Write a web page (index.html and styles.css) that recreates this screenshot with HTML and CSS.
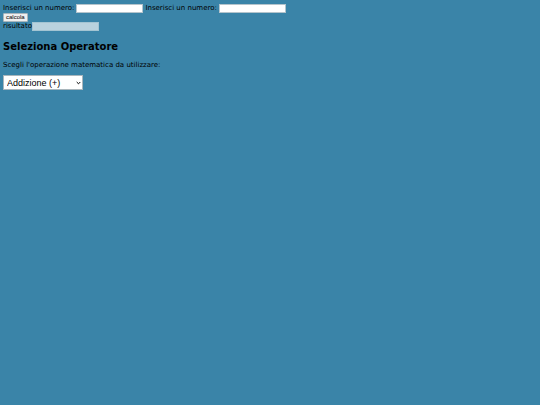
FILE: index.html
```html
<!DOCTYPE html>
<html lang="it">
<head>
    <meta charset="UTF-8">
    <meta name="viewport" content="width=device-width, initial-scale=1.0">
    <title>Calcolatrice</title>
    <link rel="stylesheet" href="styles.css">
</head>
<body>
    <div class="numeri">
        <label for="num1">Inserisci un numero:</label>
        <input type="text" id="num1" class="campo">
        <label for="num2">Inserisci un numero:</label>
        <input type="text" id="num2" class="campo">
    </div>
    <button type="button" class="calcola">calcola</button>
    <div class="risultato">
        <label for="risultato">risultato</label><input type="text" id="risultato" class="campo" disabled>
    </div>

    <h2>Seleziona Operatore</h2>
    <label for="operatore" class="descrizione">Scegli l'operazione matematica da utilizzare:</label>
    <select id="operatore" class="operatore">
        <option value="+">Addizione (+)</option>
        <option value="-">Sottrazione (-)</option>
        <option value="*">Moltiplicazione (*)</option>
        <option value="/">Divisione (/)</option>
    </select>
</body>
</html>
```
FILE: styles.css
```css
body {
    margin: 4px 3px;
    background-color: #3a84a8;
    color: black;
    font-family: Verdana, "DejaVu Sans", sans-serif;
    font-size: 7px;
    line-height: 9px;
}
.numeri,
.risultato {
    display: flex;
    align-items: center;
}
.numeri {
    gap: 2px;
}
.campo {
    box-sizing: border-box;
    width: 67px;
    height: 9px;
    padding: 0 1px;
    border: 1px solid #b4c4cc;
    background: white;
    font-family: "Liberation Sans", Arial, sans-serif;
    font-size: 6px;
}
.campo:disabled {
    border-color: #a3c4d2;
    background: #b9d2de;
}
.calcola {
    display: block;
    box-sizing: border-box;
    height: 9px;
    padding: 0 2px;
    border: 1px solid #a9b6bc;
    border-radius: 1px;
    background: #efefef;
    color: black;
    font-family: "Liberation Sans", Arial, sans-serif;
    font-size: 6px;
    line-height: 7px;
}
h2 {
    margin: 9px 0 8px;
    font-size: 10px;
    line-height: 13px;
}
.descrizione {
    display: block;
    margin-bottom: 5px;
}
.operatore {
    display: block;
    box-sizing: border-box;
    width: 80px;
    height: 15px;
    padding: 0 3px;
    border: 1px solid #a9b6bc;
    border-radius: 0;
    appearance: none;
    background: white url("data:image/svg+xml,%3Csvg xmlns='http://www.w3.org/2000/svg' viewBox='0 0 5 4'%3E%3Cpath d='M.7 1l1.8 1.8L4.3 1' fill='none' stroke='black'/%3E%3C/svg%3E") no-repeat right 1px center / 5px 4px;
    color: black;
    font-family: "Liberation Sans", Arial, sans-serif;
    font-size: 9px;
}
```
